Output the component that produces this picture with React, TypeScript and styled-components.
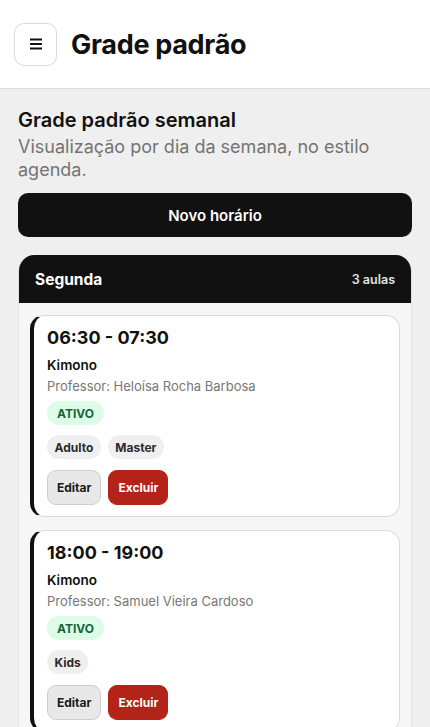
import styled, { createGlobalStyle } from 'styled-components';

const GlobalStyle = createGlobalStyle`
  * { box-sizing: border-box; }
  html, body { margin: 0; padding: 0; background: #efefef; }
  body {
    font-family: Inter, "Noto Sans", "Liberation Sans", sans-serif;
    color: #111;
    -webkit-font-smoothing: antialiased;
  }
  button { font-family: inherit; }
`;

const Page = styled.div`
  min-height: 100vh;
  background: #efefef;
`;

const Header = styled.header`
  display: flex;
  align-items: center;
  gap: 14px;
  height: 89px;
  padding: 0 14px;
  background: #fff;
  border-bottom: 1px solid #dcdcdc;
`;

const MenuButton = styled.button`
  display: flex;
  align-items: center;
  justify-content: center;
  width: 43px;
  height: 43px;
  padding: 0;
  background: #fff;
  border: 1px solid #dadada;
  border-radius: 10px;
  color: #111;
  cursor: pointer;
`;

const PageTitle = styled.h1`
  margin: 0;
  font-size: 27px;
  font-weight: 700;
  letter-spacing: -0.3px;
`;

const Main = styled.main`
  padding: 18px 18px 0;
`;

const SectionTitle = styled.h2`
  margin: 0;
  font-size: 20px;
  font-weight: 600;
  line-height: 26px;
`;

const SectionDesc = styled.p`
  margin: 2px 0 0;
  font-size: 18px;
  line-height: 23px;
  color: #747474;
`;

const PrimaryButton = styled.button`
  display: block;
  width: 100%;
  height: 44px;
  margin-top: 12px;
  background: #111;
  color: #fff;
  border: none;
  border-radius: 10px;
  font-size: 15px;
  font-weight: 600;
  cursor: pointer;
`;

const DayCard = styled.section`
  margin-top: 18px;
  background: #f6f6f6;
  border: 1px solid #e3e3e3;
  border-top: none;
  border-radius: 16px 16px 0 0;
  overflow: hidden;
`;

const DayHeader = styled.div`
  display: flex;
  align-items: center;
  justify-content: space-between;
  height: 48px;
  padding: 0 16px;
  background: #111;
  color: #fff;
`;

const DayName = styled.span`
  font-size: 15.5px;
  font-weight: 700;
`;

const DayCount = styled.span`
  font-size: 12.5px;
  font-weight: 600;
  color: #e2e2e2;
`;

const DayBody = styled.div`
  display: flex;
  flex-direction: column;
  gap: 13px;
  padding: 12px 11px;
`;

const ClassCard = styled.article`
  padding: 10px 16px 11px 13px;
  background: #fff;
  border: 1px solid #dcdcdc;
  border-left: 4px solid #111;
  border-radius: 14px;
`;

const Time = styled.div`
  font-size: 18px;
  font-weight: 700;
  line-height: 24px;
`;

const ClassName = styled.div`
  margin-top: 6px;
  font-size: 13.5px;
  font-weight: 600;
  line-height: 18px;
`;

const Teacher = styled.div`
  margin-top: 3px;
  font-size: 13px;
  line-height: 18px;
  color: #777;
`;

const Row = styled.div<{ $gap?: number; $top?: number }>`
  display: flex;
  flex-wrap: wrap;
  gap: ${({ $gap }) => $gap ?? 7}px;
  margin-top: ${({ $top }) => $top ?? 10}px;
`;

const Pill = styled.span<{ $tone?: 'green' | 'gray' }>`
  display: inline-flex;
  align-items: center;
  height: 24px;
  padding: 0 ${({ $tone }) => ($tone === 'green' ? 10 : 7.5)}px;
  border-radius: 12px;
  font-size: 12px;
  font-weight: 700;
  background: ${({ $tone }) => ($tone === 'green' ? '#dcfce8' : '#efefef')};
  color: ${({ $tone }) => ($tone === 'green' ? '#166534' : '#2b2b2b')};
`;

const ActionButton = styled.button<{ $danger?: boolean }>`
  height: 35px;
  padding: 0 9px;
  border-radius: 9px;
  font-size: 12px;
  font-weight: 700;
  cursor: pointer;
  background: ${({ $danger }) => ($danger ? '#b42318' : '#e8e8e8')};
  color: ${({ $danger }) => ($danger ? '#fff' : '#1a1a1a')};
  border: 1px solid ${({ $danger }) => ($danger ? '#b42318' : '#cdcdcd')};
`;

type Aula = {
  time: string;
  name: string;
  teacher: string;
  tags: string[];
};

const aulas: Aula[] = [
  { time: '06:30 - 07:30', name: 'Kimono', teacher: 'Heloísa Rocha Barbosa', tags: ['Adulto', 'Master'] },
  { time: '18:00 - 19:00', name: 'Kimono', teacher: 'Samuel Vieira Cardoso', tags: ['Kids'] },
  { time: '19:30 - 20:30', name: 'No-Gi', teacher: 'Rafael Souza Lima', tags: ['Adulto'] },
];

function MenuIcon() {
  return (
    <svg width="14" height="12" viewBox="0 0 14 12" aria-hidden="true">
      <path d="M1 1.5h12M1 6h12M1 10.5h12" stroke="#111" strokeWidth="1.8" strokeLinecap="butt" />
    </svg>
  );
}

function AulaCard({ aula }: { aula: Aula }) {
  return (
    <ClassCard>
      <Time>{aula.time}</Time>
      <ClassName>{aula.name}</ClassName>
      <Teacher>Professor: {aula.teacher}</Teacher>
      <Row $top={6}>
        <Pill $tone="green">ATIVO</Pill>
      </Row>
      <Row>
        {aula.tags.map((t) => (
          <Pill key={t}>{t}</Pill>
        ))}
      </Row>
      <Row $top={11}>
        <ActionButton>Editar</ActionButton>
        <ActionButton $danger>Excluir</ActionButton>
      </Row>
    </ClassCard>
  );
}

export default function App() {
  return (
    <Page>
      <GlobalStyle />
      <Header>
        <MenuButton aria-label="Menu">
          <MenuIcon />
        </MenuButton>
        <PageTitle>Grade padrão</PageTitle>
      </Header>
      <Main>
        <SectionTitle>Grade padrão semanal</SectionTitle>
        <SectionDesc>Visualização por dia da semana, no estilo agenda.</SectionDesc>
        <PrimaryButton>Novo horário</PrimaryButton>
        <DayCard>
          <DayHeader>
            <DayName>Segunda</DayName>
            <DayCount>{aulas.length} aulas</DayCount>
          </DayHeader>
          <DayBody>
            {aulas.map((a) => (
              <AulaCard key={a.time} aula={a} />
            ))}
          </DayBody>
        </DayCard>
      </Main>
    </Page>
  );
}
